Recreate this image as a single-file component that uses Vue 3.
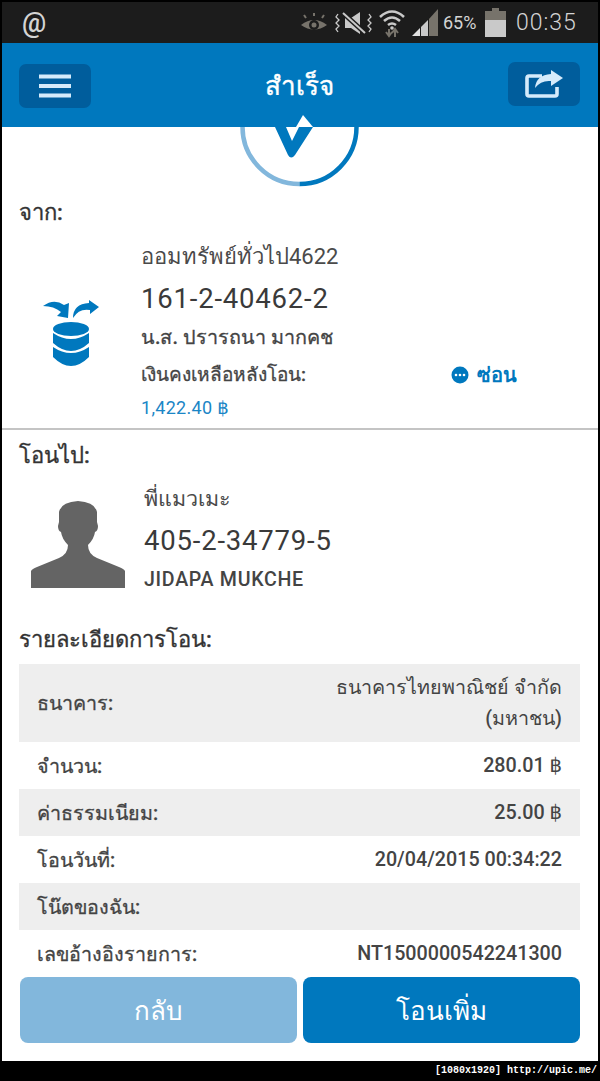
<script setup>
// Transfer success receipt screen
const details = [
  { k: 'ธนาคาร:', v: 'ธนาคารไทยพาณิชย์ จำกัด (มหาชน)', tall: true },
  { k: 'จำนวน:', v: '280.01 ฿' },
  { k: 'ค่าธรรมเนียม:', v: '25.00 ฿' },
  { k: 'โอนวันที่:', v: '20/04/2015 00:34:22' },
  { k: 'โน๊ตของฉัน:', v: '' },
  { k: 'เลขอ้างอิงรายการ:', v: 'NT1500000542241300' },
]
</script>

<template>
  <div class="screen">
    <div class="status">
      <span class="at">@</span>
      <div class="status-right">
        <svg class="eye" width="28" height="20" viewBox="0 0 28 20">
          <path d="M1 12 Q14 2 27 12 Q14 21 1 12Z" fill="#77736b"/>
          <circle cx="14" cy="12" r="5" fill="#1c1c1c"/>
          <circle cx="14" cy="12" r="2.5" fill="#77736b"/>
          <path d="M6 5 4 2M14 3V0M22 5l2-3" stroke="#77736b" stroke-width="2"/>
        </svg>
        <svg class="mute" width="38" height="24" viewBox="0 0 38 24">
          <path d="M10 7h6l9-6v22l-9-6h-6Z" fill="#c9c9c9"/>
          <path d="M8 2 30 22" stroke="#1c1c1c" stroke-width="5"/>
          <path d="M8 2 30 22" stroke="#c9c9c9" stroke-width="2"/>
          <path d="M3 3 1 6l3 3-3 3 3 3-3 3 2 3M34 3l2 3-3 3 3 3-3 3 3 3-2 3" fill="none" stroke="#c9c9c9" stroke-width="1.3"/>
        </svg>
        <svg class="wifi" width="28" height="30" viewBox="0 0 28 30">
          <path d="M2 9Q14-2 26 9M6 13q8-7 16 0M10 17q4-3 8 0" fill="none" stroke="#c9c9c9" stroke-width="2.6"/>
          <circle cx="14" cy="20" r="1.8" fill="#c9c9c9"/>
          <path d="M11 21v6M8 24l3 4 3-4" fill="none" stroke="#77736b" stroke-width="2"/>
          <path d="M17 29v-7M14 25l3-4 3 4" fill="none" stroke="#77736b" stroke-width="2"/>
        </svg>
        <svg class="signal" width="26" height="27" viewBox="0 0 26 27">
          <path d="M0 27 8 19v8Z" fill="#e0e0e0"/>
          <path d="M9 18l7-7v16H9Z" fill="#c9c9c9"/>
          <path d="M17 10 26 0v27h-9Z" fill="#77736b"/>
        </svg>
        <span class="pct">65%</span>
        <svg class="batt" width="21" height="29" viewBox="0 0 21 29">
          <rect x="7" y="0" width="7" height="3" fill="#77736b"/>
          <rect x="0" y="3" width="21" height="9" fill="#77736b"/>
          <rect x="0" y="12" width="21" height="17" fill="#c9c9c9"/>
        </svg>
        <span class="clock">00:35</span>
      </div>
    </div>

    <header class="topbar">
      <button class="tbtn menu">
        <svg width="32" height="24" viewBox="0 0 32 24"><path d="M0 2.5h32M0 12h32M0 21.5h32" stroke="#d5ebfb" stroke-width="4"/></svg>
      </button>
      <h1>สำเร็จ</h1>
      <button class="tbtn share">
        <svg width="42" height="32" viewBox="527 69 42 32">
          <path d="M546 77H533Q531 77 531 79V95Q531 97 533 97H559Q561 97 561 95V88" fill="none" stroke="#d5ebfb" stroke-width="3.6"/>
          <path d="M555 71 567 79 555 87V82Q545 81 539 89 540 76 555 75Z" fill="#d5ebfb"/>
        </svg>
      </button>
      <svg class="tip" width="20" height="12" viewBox="0 0 20 12"><path d="M7 0 17 12H0Z" fill="#fff"/></svg>
    </header>

    <main class="body">
      <div class="badge">
        <svg width="125" height="62" viewBox="0 0 125 62">
          <path d="M62.5 57A57 57 0 0 1 5.5 0" fill="none" stroke="#82b7dc" stroke-width="4.5"/>
          <path d="M62.5 57A57 57 0 0 0 119.5 0" fill="none" stroke="#0078be" stroke-width="4.5"/>
          <path d="M38 0H49L55 14 62 0H76L58 28Q54 33 51 28Z" fill="#0078be"/>
        </svg>
      </div>

      <section class="from">
        <h2>จาก:</h2>
        <div class="acct">
          <div class="acct-icon">
            <svg width="58" height="70" viewBox="42 298 58 70">
              <path d="M43 306Q54 298 64 305L69 303 68 318 57 316 61 312Q54 306 43 306Z" fill="#0078be"/>
              <path d="M73 318Q73 304 89 303V300L99 307 90 314V310Q79 308 73 318Z" fill="#0078be"/>
              <ellipse cx="71" cy="329" rx="18" ry="7" fill="#0078be"/>
              <path d="M53 333Q71 345 89 333V343Q71 359 53 343Z" fill="#0078be"/>
              <path d="M53 347Q71 359 89 347V357Q71 375 53 357Z" fill="#0078be"/>
            </svg>
          </div>
          <div class="acct-text">
            <div class="nick">ออมทรัพย์ทั่วไป4622</div>
            <div class="num">161-2-40462-2</div>
            <div class="owner">น.ส. ปรารถนา มากคช</div>
            <div class="bal-row">
              <span class="bal-label">เงินคงเหลือหลังโอน:</span>
              <span class="hide">
                <svg width="18" height="18" viewBox="0 0 18 18">
                  <circle cx="9" cy="9" r="8.5" fill="#0078be"/>
                  <circle cx="5" cy="9" r="1.3" fill="#fff"/><circle cx="9" cy="9" r="1.3" fill="#fff"/><circle cx="13" cy="9" r="1.3" fill="#fff"/>
                </svg>
                ซ่อน
              </span>
            </div>
            <div class="bal">1,422.40 ฿</div>
          </div>
        </div>
      </section>

      <section class="to">
        <h2>โอนไป:</h2>
        <div class="acct">
          <div class="acct-icon person">
            <svg width="94" height="88" viewBox="0 0 94 88">
              <path d="M0 87V70Q1 68 6 66L28 57Q37 53 37 44 31 38 30 31 27 30 27 25L28 21V11Q30 1 47 0 64 1 66 11V21L67 25Q67 30 64 31 63 38 57 44 57 53 66 57L88 66Q93 68 94 70V87Z" fill="#646464"/>
            </svg>
          </div>
          <div class="acct-text">
            <div class="nick small">พี่แมวเมะ</div>
            <div class="num">405-2-34779-5</div>
            <div class="owner latin">JIDAPA MUKCHE</div>
          </div>
        </div>

        <h2 class="detail-title">รายละเอียดการโอน:</h2>
        <div class="rows">
          <div v-for="d in details" :key="d.k" class="row" :class="{ tall: d.tall }">
            <span class="k">{{ d.k }}</span>
            <span class="v">{{ d.v }}</span>
          </div>
        </div>
      </section>
    </main>

    <footer class="actions">
      <button class="act back">กลับ</button>
      <button class="act more">โอนเพิ่ม</button>
    </footer>

    <div class="mark">[1080x1920] http://upic.me/</div>
  </div>
</template>

<style scoped>
.screen {
  width: 600px;
  height: 1081px;
  box-sizing: border-box;
  padding: 2px 2px 0;
  display: flex;
  flex-direction: column;
  background: #000;
  font-family: Roboto, "Noto Sans", "DejaVu Sans", sans-serif;
  color: #3a3a3a;
  overflow: hidden;
}
.status {
  height: 41px;
  flex: none;
  background: #1c1c1c;
  display: flex;
  align-items: center;
  justify-content: space-between;
  padding: 0 20px;
  color: #d4d4d4;
}
.at { font-size: 27px; font-weight: 500; }
.status-right { display: flex; align-items: center; }
.mute { margin-left: 7px; }
.wifi { margin-left: 5px; }
.signal { margin-left: 6px; }
.pct { font-size: 18px; margin-left: 5px; width: 34px; white-space: nowrap; }
.batt { margin-left: 8px; }
.clock { font-size: 23px; font-weight: 300; letter-spacing: 1px; margin-left: 10px; width: 62px; white-space: nowrap; }
.topbar {
  position: relative;
  height: 84px;
  flex: none;
  background: #0078be;
  display: flex;
  align-items: center;
  justify-content: space-between;
  padding: 0 18px 0 17px;
  z-index: 1;
}
.topbar h1 {
  margin: 0;
  font-size: 26px;
  font-weight: 500;
  color: #fff;
  -webkit-text-stroke: 0.4px #fff;
}
.tbtn {
  width: 72px;
  height: 44px;
  border: none;
  border-radius: 7px;
  background: #005d9c;
  display: flex;
  align-items: center;
  justify-content: center;
  padding: 0;
}
.menu { margin-top: 2px; }
.share { margin-bottom: 2px; }
.tip { position: absolute; left: 294px; bottom: 0; }
.body {
  flex: 1;
  min-height: 0;
  background: #fff;
  overflow: hidden;
}
.badge {
  height: 62px;
  padding-left: 235px;
}
h2 {
  margin: 0;
  font-size: 22px;
  font-weight: 500;
  color: #333;
  line-height: 30px;
  -webkit-text-stroke: 0.35px #333;
}
.from {
  padding: 9px 0 0 17px;
  height: 241px;
  border-bottom: 2px solid #c4c4c4;
  box-sizing: border-box;
}
.to { padding: 11px 18px 0 17px; }
.acct { display: flex; }
.from .acct { margin-top: 1px; }
.acct-icon { width: 122px; padding: 69px 0 0 23px; box-sizing: border-box; }
.acct-icon svg { display: block; }
.person { width: 125px; padding: 30px 0 0 12px; }
.acct-text { flex: 1; padding-top: 10px; }
.nick { font-size: 22px; line-height: 36px; color: #4a4a4a; }
.small { font-size: 21.5px; }
.num { font-size: 27.5px; letter-spacing: 0.8px; line-height: 43px; color: #3a3a3a; margin-top: 2px; }
.owner { font-size: 19.8px; font-weight: 500; line-height: 36px; color: #444; -webkit-text-stroke: 0.3px #444; }
.latin { font-size: 19.6px; letter-spacing: 0.7px; -webkit-text-stroke: 0; }
.bal-row {
  display: flex;
  align-items: center;
  justify-content: space-between;
  width: 376px;
  margin-top: 1px;
  line-height: 36px;
}
.bal-label { font-size: 19px; font-weight: 500; color: #444; -webkit-text-stroke: 0.3px #444; }
.hide {
  display: flex;
  align-items: center;
  gap: 8px;
  font-size: 20px;
  font-weight: 700;
  color: #0078be;
}
.bal { font-size: 18px; letter-spacing: 0.3px; color: #1a86c6; line-height: 30px; }
.detail-title { margin-top: 27px; }
.rows { margin-top: 9px; }
.row {
  min-height: 47px;
  padding: 0 18px;
  display: flex;
  align-items: center;
  justify-content: space-between;
  font-size: 19.7px;
  font-weight: 500;
  color: #444;
  box-sizing: border-box;
}
.row:nth-child(odd) { background: #eee; }
.tall { min-height: 78px; }
.k { flex: none; -webkit-text-stroke: 0.3px #444; }
.v { text-align: right; max-width: 250px; line-height: 31px; }
.actions {
  height: 84px;
  flex: none;
  background: #fff;
  box-sizing: border-box;
  padding: 0 18px 18px;
  display: flex;
  gap: 6px;
}
.act {
  flex: 1;
  border: none;
  border-radius: 8px;
  color: #fff;
  font-family: inherit;
  font-size: 26px;
  padding: 0;
}
.back { background: #82b7dc; }
.more { background: #0078be; }
.mark {
  height: 20px;
  flex: none;
  line-height: 20px;
  text-align: right;
  padding-right: 1px;
  color: #fff;
  font-family: "Liberation Mono", monospace;
  font-size: 10px;
  font-weight: 700;
}
</style>

<style>
html, body { background: #000; }
</style>
